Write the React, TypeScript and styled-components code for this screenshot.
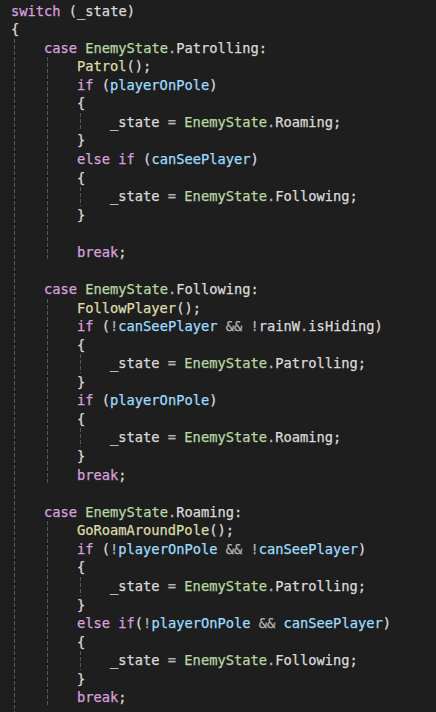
import React from "react";
import styled, { createGlobalStyle } from "styled-components";

const Global = createGlobalStyle`
  html, body { margin: 0; padding: 0; background: #1e1e1e; overflow: hidden; }
  #root { width: 436px; height: 712px; }
`;

const Editor = styled.div`
  width: 436px;
  height: 712px;
  box-sizing: border-box;
  padding: 1.5px 0 0 11px;
  background: #1e1e1e;
  font-family: "DejaVu Sans Mono", "Liberation Mono", monospace;
  font-size: 13.72px;
  color: #dadada;
  -webkit-text-stroke: 0.25px currentColor;
  overflow: hidden;
`;

const Line = styled.div`
  height: 18.57px;
  line-height: 18.57px;
  white-space: pre;
`;

const Block = styled.div<{ $guide?: boolean }>`
  padding-left: 33px;
  background-image: ${(p) =>
    p.$guide === false
      ? "none"
      : "repeating-linear-gradient(to bottom, #575757 0 4px, transparent 4px 6px)"};
  background-size: 1px 100%;
  background-repeat: no-repeat;
  background-position: 3px 0;
`;

const Kw = styled.span`color: #d8a0df;`;
const Fn = styled.span`color: #dcdcaa;`;
const Ty = styled.span`color: #b8d7a3;`;
const Loc = styled.span`color: #9cdcfe;`;
const Id = styled.span`color: #dadada;`;
const Op = styled.span`color: #b4b4b4;`;

const Assign = ({ member }: { member: string }) => (
  <Line>
    <Id>_state</Id> <Op>=</Op> <Ty>EnemyState</Ty>
    <Op>.</Op>
    <Id>{member}</Id>;
  </Line>
);

const Braced = ({ member }: { member: string }) => (
  <>
    <Line>{"{"}</Line>
    <Block>
      <Assign member={member} />
    </Block>
    <Line>{"}"}</Line>
  </>
);

const Case = ({ member }: { member: string }) => (
  <Line>
    <Kw>case</Kw> <Ty>EnemyState</Ty>
    <Op>.</Op>
    <Id>{member}</Id>:
  </Line>
);

const Brk = () => (
  <Line>
    <Kw>break</Kw>;
  </Line>
);

export default function App() {
  return (
    <>
      <Global />
      <Editor>
        <Line>
          <Kw>switch</Kw> (<Id>_state</Id>)
        </Line>
        <Line>{"{"}</Line>
        <Block>
          <Case member="Patrolling" />
          <Block>
            <Line>
              <Fn>Patrol</Fn>();
            </Line>
            <Line>
              <Kw>if</Kw> (<Loc>playerOnPole</Loc>)
            </Line>
            <Braced member="Roaming" />
            <Line>
              <Kw>else</Kw> <Kw>if</Kw> (<Loc>canSeePlayer</Loc>)
            </Line>
            <Braced member="Following" />
            <Line> </Line>
            <Brk />
          </Block>
          <Line> </Line>
          <Case member="Following" />
          <Block>
            <Line>
              <Fn>FollowPlayer</Fn>();
            </Line>
            <Line>
              <Kw>if</Kw> (<Op>!</Op>
              <Loc>canSeePlayer</Loc> <Op>&amp;&amp;</Op> <Op>!</Op>
              <Id>rainW</Id>
              <Op>.</Op>
              <Id>isHiding</Id>)
            </Line>
            <Braced member="Patrolling" />
            <Line>
              <Kw>if</Kw> (<Loc>playerOnPole</Loc>)
            </Line>
            <Braced member="Roaming" />
            <Brk />
          </Block>
          <Line> </Line>
          <Case member="Roaming" />
          <Block>
            <Line>
              <Fn>GoRoamAroundPole</Fn>();
            </Line>
            <Line>
              <Kw>if</Kw> (<Op>!</Op>
              <Loc>playerOnPole</Loc> <Op>&amp;&amp;</Op> <Op>!</Op>
              <Loc>canSeePlayer</Loc>)
            </Line>
            <Braced member="Patrolling" />
            <Line>
              <Kw>else</Kw> <Kw>if</Kw>(<Op>!</Op>
              <Loc>playerOnPole</Loc> <Op>&amp;&amp;</Op> <Loc>canSeePlayer</Loc>)
            </Line>
            <Braced member="Following" />
            <Brk />
          </Block>
          <Line> </Line>
        </Block>
      </Editor>
    </>
  );
}
